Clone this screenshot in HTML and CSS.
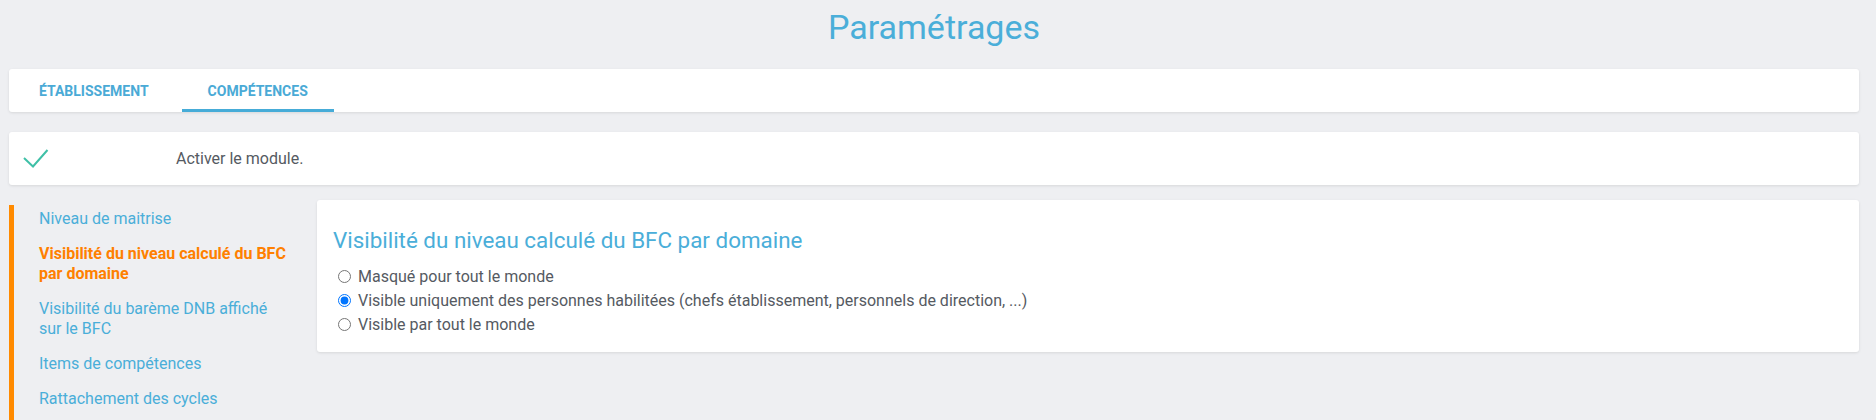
FILE: index.html
```html
<!DOCTYPE html>
<html lang="fr">
<head>
<meta charset="utf-8">
<title>Paramétrages</title>
<link rel="stylesheet" href="styles.css">
</head>
<body>
<div class="page">
  <h1 class="title">Paramétrages</h1>

  <nav class="card tabs">
    <a class="tab">Établissement</a>
    <a class="tab active">Compétences</a>
  </nav>

  <div class="card module">
    <span class="check-col">
      <svg class="check" width="26" height="19" viewBox="0 0 26 19" aria-hidden="true">
        <polyline points="1,9 10,17.5 24.5,1" fill="none" stroke="#3fc0a7" stroke-width="2"/>
      </svg>
    </span>
    <span class="module-label">Activer le module.</span>
  </div>

  <div class="content">
    <ul class="sidebar">
      <li><a class="side-link">Niveau de maitrise</a></li>
      <li><a class="side-link active">Visibilité du niveau calculé du BFC par domaine</a></li>
      <li><a class="side-link">Visibilité du barème DNB affiché sur le BFC</a></li>
      <li><a class="side-link">Items de compétences</a></li>
      <li><a class="side-link">Rattachement des cycles</a></li>
    </ul>

    <section class="card panel">
      <h2 class="panel-title">Visibilité du niveau calculé du BFC par domaine</h2>
      <label class="option"><input type="radio" name="vis"> Masqué pour tout le monde</label>
      <label class="option"><input type="radio" name="vis" checked> Visible uniquement des personnes habilitées (chefs établissement, personnels de direction, ...)</label>
      <label class="option"><input type="radio" name="vis"> Visible par tout le monde</label>
    </section>
  </div>
</div>
</body>
</html>
```

FILE: styles.css
```css
html, body {
  margin: 0;
  padding: 0;
}

body {
  background: #eeeff2;
  font-family: Roboto, "Liberation Sans", sans-serif;
  color: #555a62;
  overflow: hidden;
}

.page {
  padding: 0 17px 0 9px;
}

.title {
  margin: 0 0 14px;
  line-height: 55px;
  font-size: 34px;
  font-weight: 400;
  text-align: center;
  color: #4aaed9;
}

.card {
  background: #fff;
  border-radius: 3px;
  box-shadow: 0 1px 3px rgba(0, 0, 0, 0.1);
}

.tabs {
  display: flex;
  gap: 7px;
  height: 43px;
  padding-left: 4px;
  box-sizing: border-box;
}

.tab {
  display: flex;
  align-items: center;
  padding: 3px 26px 0;
  font-size: 14px;
  font-weight: 700;
  text-transform: uppercase;
  color: #4aaad6;
  border-bottom: 3px solid transparent;
}

.tab.active {
  border-bottom-color: #46acd8;
}

.module {
  margin-top: 20px;
  height: 53px;
  display: flex;
  align-items: center;
}

.check-col {
  display: flex;
  align-items: center;
  width: 167px;
  padding-left: 14px;
  box-sizing: border-box;
}

.check {
  display: block;
  margin-top: -1px;
}

.module-label {
  font-size: 16px;
}

.content {
  display: flex;
  margin-top: 15px;
  align-items: flex-start;
}

.sidebar {
  list-style: none;
  margin: 5px 0 0;
  padding: 4px 0 0 25px;
  width: 308px;
  box-sizing: border-box;
  height: 215px;
  border-left: 5px solid #ff8a00;
  display: flex;
  flex-direction: column;
  gap: 15px;
}

.sidebar li {
  width: 250px;
}

.side-link {
  display: block;
  font-size: 16px;
  line-height: 20px;
  color: #4aaed9;
}

.side-link.active {
  color: #ff8000;
  font-weight: 700;
}

.panel {
  flex: 1;
  padding: 27px 16px 16px;
}

.panel-title {
  margin: 0 0 11px;
  font-size: 22.4px;
  line-height: 26px;
  font-weight: 400;
  color: #4aaed9;
}

.option {
  display: flex;
  align-items: center;
  height: 24px;
  font-size: 16px;
  white-space: pre;
}

.option input {
  margin: 0 3px 0 5px;
  width: 13px;
  height: 13px;
}
```
